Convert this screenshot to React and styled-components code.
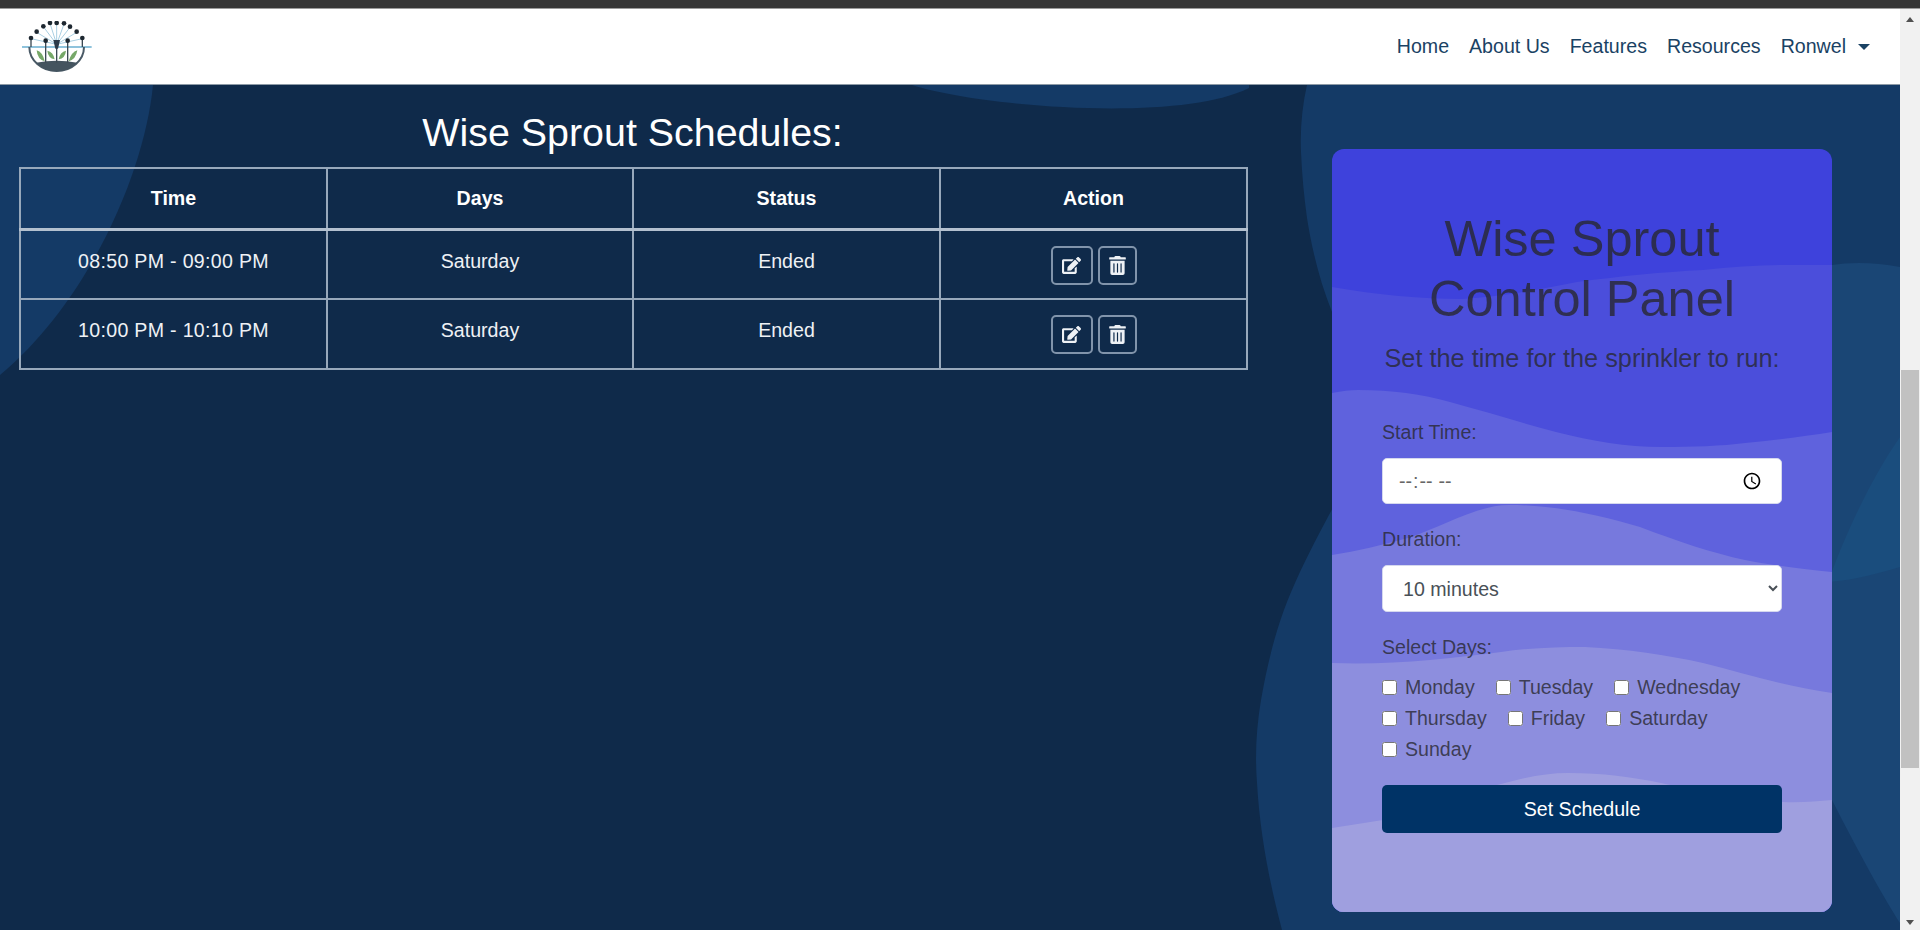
import React from 'react';
import styled, { createGlobalStyle } from 'styled-components';
import { FaEdit, FaTrashAlt } from 'react-icons/fa';

const GlobalStyle = createGlobalStyle`
  html, body {
    margin: 0;
    padding: 0;
    background: #0f2a4a;
  }
  body {
    font-family: "Liberation Sans", Arial, sans-serif;
    font-size: 19.6px;
  }
  * {
    box-sizing: border-box;
  }
`;

const schedules = [
  { id: 1, time: '08:50 PM - 09:00 PM', days: 'Saturday', status: 'Ended' },
  { id: 2, time: '10:00 PM - 10:10 PM', days: 'Saturday', status: 'Ended' },
];

const navLinks = ['Home', 'About Us', 'Features', 'Resources'];
const weekDays = ['Monday', 'Tuesday', 'Wednesday', 'Thursday', 'Friday', 'Saturday', 'Sunday'];

const Logo = () => (
  <LogoMark width='70' height='52' viewBox='66 65 210 156' aria-label='Wise Sprout'>
    <g stroke='#a9cfe2' strokeWidth='3' fill='none'>
      <path d='M170 135 L150 72 M170 135 L170 72 M170 135 L192 74 M170 135 L130 82 M170 135 L210 84 M170 135 L110 99 M170 135 L230 99 M170 135 L93 118 M170 135 L247 118' />
    </g>
    <path d='M66 143 H275' stroke='#8fc3dc' strokeWidth='6' />
    <path d='M88 143 A82 72 0 0 0 252 143' fill='none' stroke='#4a5a66' strokeWidth='6' />
    <path d='M108 190 Q170 178 232 190 Q205 216 170 216 Q135 216 108 190 Z' fill='#44545f' />
    <path d='M137 124 V190 M203 124 V190 M170 140 V190 M93 116 V143 M247 116 V143' stroke='#3c4a54' strokeWidth='4' fill='none' />
    <path d='M110 153 Q128 158 134 186 Q112 180 110 153 Z M142 154 Q160 158 164 180 Q144 176 142 154 Z M232 153 Q214 158 206 186 Q228 180 232 153 Z M198 154 Q180 158 176 180 Q196 176 198 154 Z' fill='#76a868' />
    <path d='M160 122 L180 122 L174 148 L166 148 Z' fill='#2b3a48' />
    <g fill='#1d2730'>
      <circle cx='150' cy='71' r='7' />
      <circle cx='170' cy='71' r='7' />
      <circle cx='192' cy='72' r='7' />
      <circle cx='130' cy='81' r='7' />
      <circle cx='210' cy='82' r='7' />
      <circle cx='110' cy='97' r='7' />
      <circle cx='230' cy='97' r='7' />
      <circle cx='93' cy='116' r='7' />
      <circle cx='247' cy='116' r='7' />
      <circle cx='137' cy='124' r='7' />
      <circle cx='203' cy='124' r='7' />
    </g>
  </LogoMark>
);

const App = () => {
  return (
    <>
      <GlobalStyle />
      <Window>
        <TopStrip />
        <Shell>
          <Viewport>
            <Navbar>
              <Logo />
              <NavList>
                {navLinks.map((link) => (
                  <NavLink key={link}>{link}</NavLink>
                ))}
                <NavLink>
                  Ronwel
                  <Caret />
                </NavLink>
              </NavList>
            </Navbar>
            <Main>
              <Backdrop viewBox='0 0 1900 845' preserveAspectRatio='none'>
                <path d='M0 0 H153 C145 85 90 215 0 290 Z' fill='#143a66' />
                <path d='M912 0 C980 22 1180 38 1249 3 V0 Z' fill='#143a66' />
                <path
                  d='M1307 0 C1302 22 1300 45 1301 67 C1302 90 1304 112 1307 133 C1312 165 1320 197 1332 227 H1360 V400 H1345 C1332 425 1312 460 1295 498 C1278 535 1268 575 1261 615 C1256 645 1255 672 1257 698 C1260 750 1270 800 1282 845 H1900 V0 Z'
                  fill='#143a66'
                />
                <path
                  d='M1340 205 C1500 195 1700 180 1832 180 C1850 177 1875 177 1900 182 V838 C1885 815 1860 770 1832 715 H1340 Z'
                  fill='#1a4675'
                />
                <path d='M1900 352 C1870 395 1845 450 1828 497 C1855 495 1880 488 1900 482 Z' fill='#1a4d7d' />
              </Backdrop>
              <ScheduleSection>
                <SectionTitle>Wise Sprout Schedules:</SectionTitle>
                <ScheduleTable>
                  <colgroup>
                    <col width='307' />
                    <col width='306' />
                    <col width='307' />
                    <col width='307' />
                  </colgroup>
                  <thead>
                    <tr>
                      <HeadCell>Time</HeadCell>
                      <HeadCell>Days</HeadCell>
                      <HeadCell>Status</HeadCell>
                      <HeadCell>Action</HeadCell>
                    </tr>
                  </thead>
                  <tbody>
                    {schedules.map((schedule) => (
                      <tr key={schedule.id}>
                        <BodyCell $spaced>{schedule.time}</BodyCell>
                        <BodyCell>{schedule.days}</BodyCell>
                        <BodyCell>{schedule.status}</BodyCell>
                        <ActionCell>
                          <ActionGroup>
                            <IconButton type='button' $wide>
                              <FaEdit />
                            </IconButton>
                            <IconButton type='button'>
                              <FaTrashAlt />
                            </IconButton>
                          </ActionGroup>
                        </ActionCell>
                      </tr>
                    ))}
                  </tbody>
                </ScheduleTable>
              </ScheduleSection>
              <ControlCard>
                <CardWaves viewBox='0 0 500 763' preserveAspectRatio='none'>
                  <path d='M0 138 C45 146 90 150 130 150 C170 148 210 140 245 133 C290 127 330 123 371 121 C400 118 430 116 455 116 C470 116 485 116 500 116 V763 H0 Z' fill='#4b4edb' />
                  <path d='M0 244 C10 242 18 241 26 241 C60 241 90 245 118 253 C155 263 190 274 224 283 C260 292 295 298 329 298 C360 298 390 297 413 294 C445 291 475 287 500 283 V763 H0 Z' fill='#5f62dd' />
                  <path d='M0 406 C25 402 50 396 76 389 C110 378 145 356 177 356 C220 356 265 365 308 378 C345 392 380 404 413 411 C445 417 475 421 500 423 V763 H0 Z' fill='#7779dd' />
                  <path d='M0 514 C60 516 115 510 169 503 C195 499 225 498 253 498 C295 500 335 506 371 514 C415 525 455 538 500 544 V763 H0 Z' fill='#8d8ede' />
                  <path d='M0 679 C17 676 34 674 51 671 C90 658 130 644 173 634 C195 628 215 624 236 624 C270 624 300 628 329 634 C370 643 410 650 451 653 C470 654 485 652 500 651 V763 H0 Z' fill='#9f9fdf' />
                </CardWaves>
                <CardBody>
                  <CardTitle>
                    Wise Sprout
                    <br />
                    Control Panel
                  </CardTitle>
                  <CardSubtitle>Set the time for the sprinkler to run:</CardSubtitle>
                  <FieldLabel htmlFor='startTime'>Start Time:</FieldLabel>
                  <TimeInput id='startTime' type='time' />
                  <FieldLabel htmlFor='duration'>Duration:</FieldLabel>
                  <DurationSelect id='duration' defaultValue='10'>
                    <option value='10'>10 minutes</option>
                    <option value='20'>20 minutes</option>
                    <option value='30'>30 minutes</option>
                  </DurationSelect>
                  <FieldLabel as='div'>Select Days:</FieldLabel>
                  <DayList>
                    {weekDays.map((day) => (
                      <DayOption key={day}>
                        <input type='checkbox' />
                        {day}
                      </DayOption>
                    ))}
                  </DayList>
                  <SubmitButton type='button'>Set Schedule</SubmitButton>
                </CardBody>
              </ControlCard>
            </Main>
          </Viewport>
          <Scrollbar>
            <ScrollArrow />
            <ScrollThumb />
            <ScrollArrow $down />
          </Scrollbar>
        </Shell>
      </Window>
    </>
  );
};

export default App;

const Window = styled.div`
  display: flex;
  flex-direction: column;
  height: 930px;
  overflow: hidden;
`;

const TopStrip = styled.div`
  flex: none;
  height: 9px;
  background: #353535;
  border-bottom: 1px solid #9a9a9a;
`;

const Shell = styled.div`
  flex: 1;
  display: flex;
  min-height: 0;
`;

const Viewport = styled.div`
  flex: 1;
  display: flex;
  flex-direction: column;
  min-width: 0;
`;

const Navbar = styled.nav`
  flex: none;
  display: flex;
  align-items: center;
  justify-content: space-between;
  height: 76px;
  padding: 0 30px 0 22px;
  background: #fff;
  border-bottom: 1px solid #8d9aa6;
`;

const LogoMark = styled.svg`
  filter: blur(0.4px);
`;

const NavList = styled.div`
  display: flex;
  align-items: center;
  gap: 20px;
`;

const NavLink = styled.a`
  display: flex;
  align-items: center;
  font-size: 19.6px;
  color: #1a4264;
`;

const Caret = styled.span`
  margin-left: 12px;
  border-top: 6px solid #1a4264;
  border-left: 6px solid transparent;
  border-right: 6px solid transparent;
`;

const Main = styled.main`
  position: relative;
  flex: 1;
  display: flex;
  align-items: flex-start;
  background: #0f2a4a;
  overflow: hidden;
`;

const Backdrop = styled.svg`
  position: absolute;
  inset: 0;
  width: 100%;
  height: 100%;
`;

const ScheduleSection = styled.section`
  position: relative;
  flex: none;
  width: 1227px;
  margin-left: 19px;
  padding-top: 23px;
`;

const SectionTitle = styled.h2`
  margin: 0 0 11px;
  font-size: 39.4px;
  line-height: 48px;
  font-weight: 400;
  text-align: center;
  color: #fff;
`;

const ScheduleTable = styled.table`
  width: 100%;
  table-layout: fixed;
  border-collapse: collapse;
  color: #fff;
`;

const HeadCell = styled.th`
  height: 61px;
  padding: 0;
  font-size: 19.6px;
  font-weight: 700;
  text-align: center;
  border: 2px solid #97a8bb;
  border-bottom: 3px solid #b3c0cf;
`;

const BodyCell = styled.td`
  height: 70px;
  padding: 18px 0 0;
  font-size: 19.6px;
  line-height: 24px;
  letter-spacing: ${(props) => (props.$spaced ? '0.3px' : 'normal')};
  text-align: center;
  vertical-align: top;
  color: #eef1f5;
  border: 2px solid #97a8bb;
`;

const ActionCell = styled(BodyCell)`
  padding-top: 15px;
`;

const ActionGroup = styled.div`
  display: flex;
  justify-content: center;
  gap: 5px;
`;

const IconButton = styled.button`
  display: flex;
  align-items: center;
  justify-content: center;
  width: ${(props) => (props.$wide ? '42px' : '39px')};
  height: 39px;
  padding: 0;
  background: transparent;
  color: #eef1f5;
  font-size: 19px;
  border: 2px solid #8194ab;
  border-radius: 5px;
`;

const ControlCard = styled.div`
  position: relative;
  flex: none;
  width: 500px;
  height: 763px;
  margin: 64px 0 0 86px;
  border-radius: 12px;
  background: #3e42dc;
  overflow: hidden;
`;

const CardWaves = styled.svg`
  position: absolute;
  inset: 0;
  width: 100%;
  height: 100%;
`;

const CardBody = styled.form`
  position: relative;
  display: flex;
  flex-direction: column;
  padding: 60px 50px 0;
  color: rgba(40, 40, 48, 0.8);
`;

const CardTitle = styled.h1`
  margin: 0 0 14px;
  font-size: 50.5px;
  line-height: 60px;
  font-weight: 400;
  text-align: center;
`;

const CardSubtitle = styled.p`
  margin: 0 0 45px;
  font-size: 25.3px;
  line-height: 30px;
  text-align: center;
  white-space: nowrap;
`;

const FieldLabel = styled.label`
  margin-bottom: 12px;
  font-size: 19.6px;
  line-height: 28px;
`;

const TimeInput = styled.input`
  height: 46px;
  margin-bottom: 21px;
  padding: 0 19px 0 15px;
  font-family: inherit;
  font-size: 19.6px;
  letter-spacing: 0.8px;
  color: #666;
  background: #fff;
  border: 1px solid #d5d8ee;
  border-radius: 5px;

  &::-webkit-calendar-picker-indicator {
    width: 20px;
    height: 20px;
    margin: 0;
    padding: 0;
    background-size: 20px 20px;
  }
`;

const DurationSelect = styled.select`
  height: 47px;
  margin-bottom: 21px;
  padding: 0 16px;
  font-family: inherit;
  font-size: 19.6px;
  color: #495057;
  background: #fff;
  border: 1px solid #d5d8ee;
  border-radius: 5px;
`;

const DayList = styled.div`
  display: flex;
  flex-wrap: wrap;
  gap: 7px 21px;
  margin: 2px 0 24px;
`;

const DayOption = styled.label`
  display: flex;
  align-items: center;
  gap: 8px;
  font-size: 19.6px;
  line-height: 24px;

  & input {
    width: 15px;
    height: 15px;
    margin: 0;
  }
`;

const SubmitButton = styled.button`
  height: 48px;
  font-family: inherit;
  font-size: 19.6px;
  color: #fff;
  background: #003366;
  border: none;
  border-radius: 5px;
`;

const Scrollbar = styled.div`
  flex: none;
  display: flex;
  flex-direction: column;
  align-items: center;
  width: 20px;
  background: #f1f1f1;
`;

const ScrollArrow = styled.div`
  flex: none;
  width: 0;
  margin-top: ${(props) => (props.$down ? '152px' : '8px')};
  border-left: 4px solid transparent;
  border-right: 4px solid transparent;
  border-bottom: ${(props) => (props.$down ? 'none' : '5px solid #505050')};
  border-top: ${(props) => (props.$down ? '5px solid #505050' : 'none')};
`;

const ScrollThumb = styled.div`
  flex: none;
  width: 18px;
  height: 398px;
  margin-top: 348px;
  background: #c1c1c1;
`;
